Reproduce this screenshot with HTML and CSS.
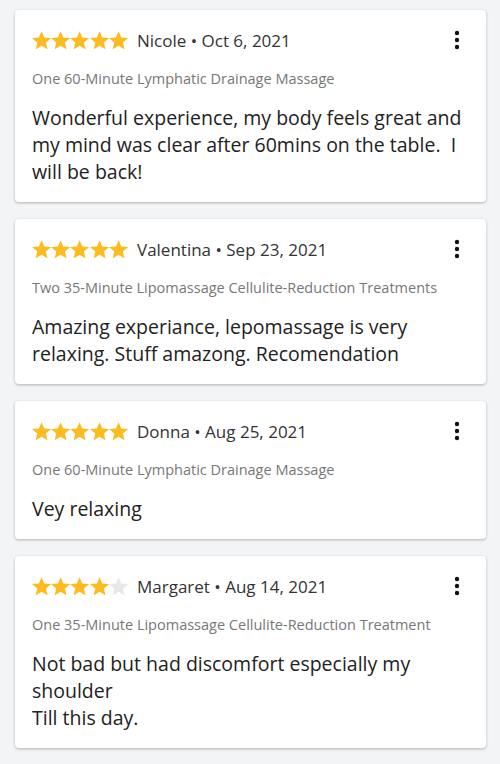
FILE: index.html
```html
<!DOCTYPE html>
<html>
<head>
<meta charset="utf-8">
<link rel="stylesheet" href="styles.css">
</head>
<body>
<svg width="0" height="0" class="defs">
  <defs>
    <path id="star" d="M12 17.27L18.18 21l-1.64-7.03L22 9.24l-7.19-.61L12 2 9.19 8.63 2 9.24l5.46 4.73L5.820 21z"/>
  </defs>
</svg>
<div class="list">
  <div class="card">
    <div class="head">
      <div class="stars">
        <svg viewBox="2 2 20 19" class="star on"><use href="#star"/></svg><svg viewBox="2 2 20 19" class="star on"><use href="#star"/></svg><svg viewBox="2 2 20 19" class="star on"><use href="#star"/></svg><svg viewBox="2 2 20 19" class="star on"><use href="#star"/></svg><svg viewBox="2 2 20 19" class="star on"><use href="#star"/></svg>
      </div>
      <span class="who">Nicole • Oct 6, 2021</span>
      <svg class="more" viewBox="0 0 10 24"><circle cx="5" cy="5" r="2.2"/><circle cx="5" cy="12" r="2.2"/><circle cx="5" cy="19" r="2.2"/></svg>
    </div>
    <div class="service">One 60-Minute Lymphatic Drainage Massage</div>
    <div class="text">Wonderful experience, my body feels great and my mind was clear after 60mins on the table.&nbsp; I will be back!</div>
  </div>
  <div class="card">
    <div class="head">
      <div class="stars">
        <svg viewBox="2 2 20 19" class="star on"><use href="#star"/></svg><svg viewBox="2 2 20 19" class="star on"><use href="#star"/></svg><svg viewBox="2 2 20 19" class="star on"><use href="#star"/></svg><svg viewBox="2 2 20 19" class="star on"><use href="#star"/></svg><svg viewBox="2 2 20 19" class="star on"><use href="#star"/></svg>
      </div>
      <span class="who">Valentina • Sep 23, 2021</span>
      <svg class="more" viewBox="0 0 10 24"><circle cx="5" cy="5" r="2.2"/><circle cx="5" cy="12" r="2.2"/><circle cx="5" cy="19" r="2.2"/></svg>
    </div>
    <div class="service">Two 35-Minute Lipomassage Cellulite-Reduction Treatments</div>
    <div class="text">Amazing experiance, lepomassage is very relaxing. Stuff amazong. Recomendation</div>
  </div>
  <div class="card">
    <div class="head">
      <div class="stars">
        <svg viewBox="2 2 20 19" class="star on"><use href="#star"/></svg><svg viewBox="2 2 20 19" class="star on"><use href="#star"/></svg><svg viewBox="2 2 20 19" class="star on"><use href="#star"/></svg><svg viewBox="2 2 20 19" class="star on"><use href="#star"/></svg><svg viewBox="2 2 20 19" class="star on"><use href="#star"/></svg>
      </div>
      <span class="who">Donna • Aug 25, 2021</span>
      <svg class="more" viewBox="0 0 10 24"><circle cx="5" cy="5" r="2.2"/><circle cx="5" cy="12" r="2.2"/><circle cx="5" cy="19" r="2.2"/></svg>
    </div>
    <div class="service">One 60-Minute Lymphatic Drainage Massage</div>
    <div class="text">Vey relaxing</div>
  </div>
  <div class="card">
    <div class="head">
      <div class="stars">
        <svg viewBox="2 2 20 19" class="star on"><use href="#star"/></svg><svg viewBox="2 2 20 19" class="star on"><use href="#star"/></svg><svg viewBox="2 2 20 19" class="star on"><use href="#star"/></svg><svg viewBox="2 2 20 19" class="star on"><use href="#star"/></svg><svg viewBox="2 2 20 19" class="star off"><use href="#star"/></svg>
      </div>
      <span class="who">Margaret • Aug 14, 2021</span>
      <svg class="more" viewBox="0 0 10 24"><circle cx="5" cy="5" r="2.2"/><circle cx="5" cy="12" r="2.2"/><circle cx="5" cy="19" r="2.2"/></svg>
    </div>
    <div class="service">One 35-Minute Lipomassage Cellulite-Reduction Treatment</div>
    <div class="text">Not bad but had discomfort especially my shoulder<br>Till this day.</div>
  </div>
</div>
</body>
</html>
```
FILE: styles.css
```css
html, body {
  margin: 0;
  padding: 0;
  background: #f3f4f6;
}
body {
  font-family: "Open Sans", "Noto Sans", sans-serif;
  color: #222;
}
.defs {
  position: absolute;
  width: 0;
  height: 0;
}
.list {
  display: flex;
  flex-direction: column;
  gap: 17px;
  padding: 10px 14px 10px 15px;
}
.card {
  background: #fff;
  border-radius: 4px;
  box-shadow: 0 1px 3px rgba(0,0,0,0.28);
  padding: 18px 17px 17px 17px;
}
.head {
  display: flex;
  align-items: center;
  height: 24px;
}
.stars {
  display: flex;
  width: 96px;
  margin-right: 9px;
}
.star {
  width: 19.2px;
  height: 18.5px;
  flex: none;
}
.star.on { fill: #fcbc1f; }
.star.off { fill: #e8e8e8; }
.who {
  font-size: 17px;
  color: #333;
  flex: 1;
}
.more {
  width: 10px;
  height: 24px;
  fill: #111;
  margin-right: 7px;
}
.service {
  margin-top: 17px;
  font-size: 14.5px;
  color: #777;
  line-height: 20px;
}
.text {
  margin-top: 15px;
  font-size: 19.5px;
  line-height: 27px;
  color: #222;
}
```
